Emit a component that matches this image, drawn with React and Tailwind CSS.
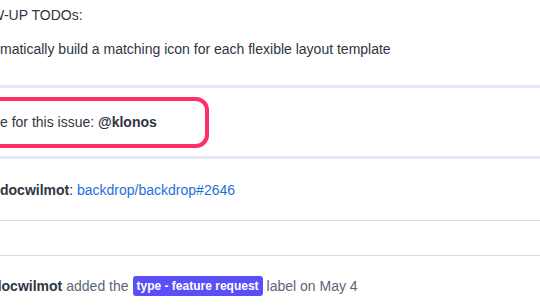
import React from 'react';

const font = { fontFamily: '"Liberation Sans", Arial, sans-serif' };

const App = () => {
  return (
    <div className="w-[540px] h-[305px] overflow-hidden bg-white text-[14px] text-[#2f3541]" style={font}>
      {/* follow-up todos */}
      <div className="h-[31px] flex items-center whitespace-nowrap">
        <span className="ml-[-9px]">W-UP TODOs:</span>
      </div>
      <div className="h-[37px] flex items-center whitespace-nowrap">
        <span className="ml-0">matically build a matching icon for each flexible layout template</span>
      </div>
      <div className="h-[17px]" />
      <div className="h-[3px] bg-[#e1e8f9]" />

      {/* highlighted maintainer line */}
      <div className="h-[68px] flex items-center">
        <div className="ml-[-20px] w-[229px] h-[51px] border-[4px] border-[#ff2d69] rounded-[13px] flex items-center pl-[16px] whitespace-nowrap">
          <span>e for this issue:&nbsp;</span>
          <span className="font-bold">@klonos</span>
        </div>
      </div>
      <div className="h-[3px] bg-[#e1e8f9]" />

      {/* cross reference */}
      <div className="h-[61px] pt-[1px] flex items-center whitespace-nowrap">
        <span className="font-bold">docwilmot</span>
        <span>:&nbsp;</span>
        <a href="#" className="text-[#1f6fdb]">backdrop/backdrop#2646</a>
      </div>
      <div className="h-px bg-[#d6ddf2]" />
      <div className="h-[34px]" />
      <div className="h-px bg-[#d6ddf2]" />

      {/* label event */}
      <div className="h-[60px] flex items-center whitespace-nowrap text-[#5b6577]">
        <span className="ml-[-7px] font-bold text-[#2f3541]">docwilmot</span>
        <span className="ml-[4px]">added the</span>
        <span className="ml-[4px] bg-[#5a4ff6] text-white font-bold text-[12px] px-[4px] h-[20px] leading-[20px] rounded-[3px]">
          type - feature request
        </span>
        <span className="ml-[4px]">label on May 4</span>
      </div>
    </div>
  );
};

export default App;
